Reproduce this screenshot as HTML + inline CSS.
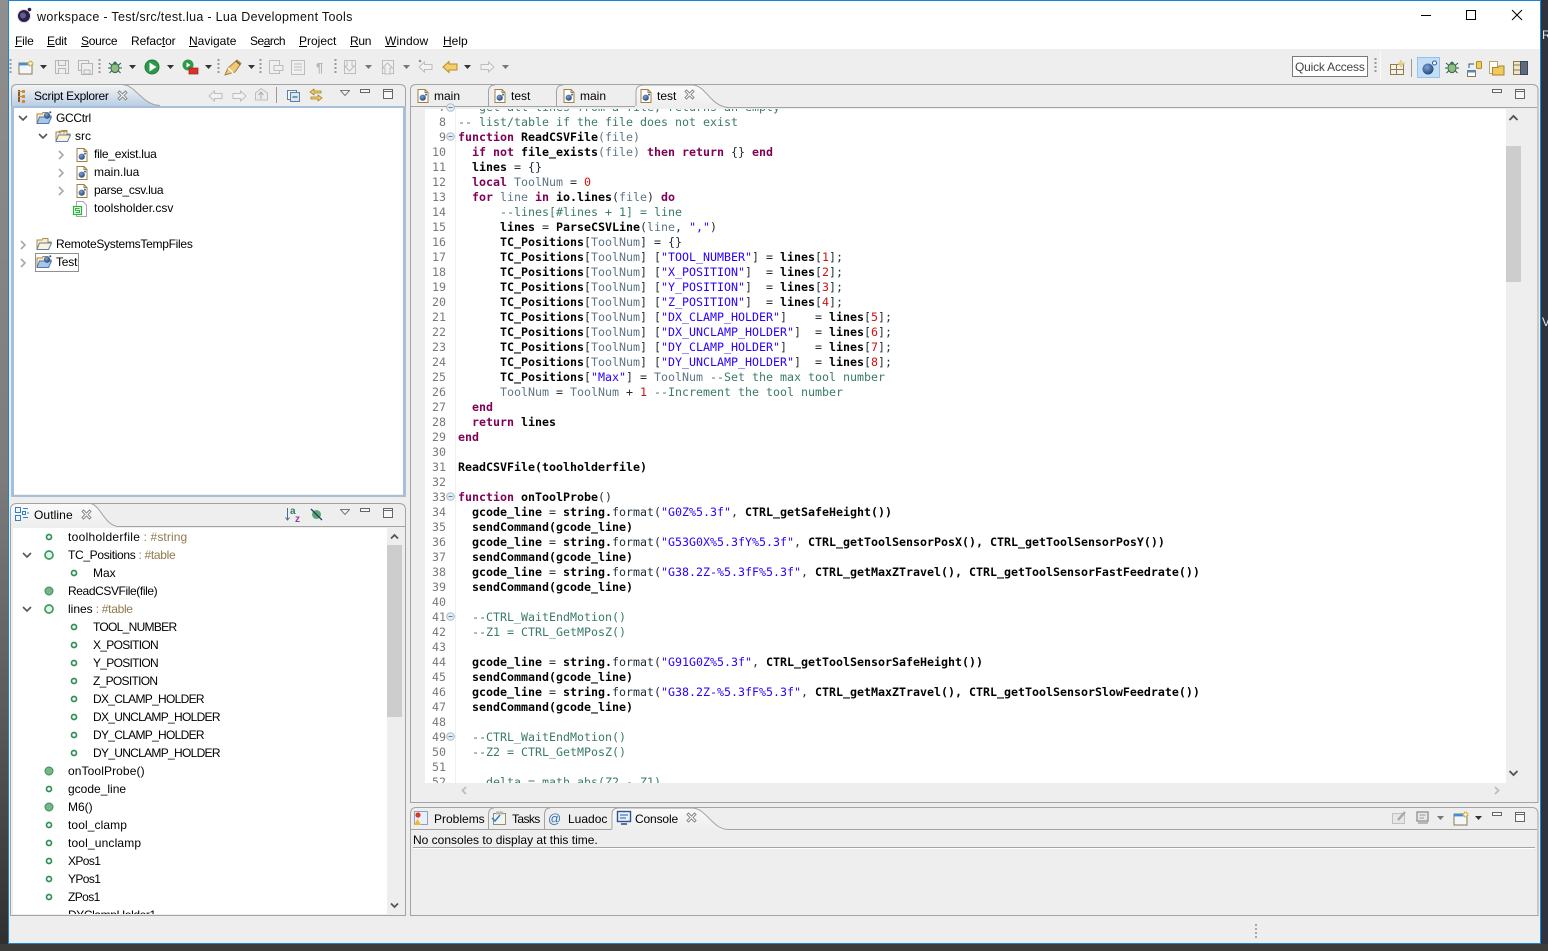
<!DOCTYPE html>
<html>
<head>
<meta charset="utf-8">
<title>workspace - Test/src/test.lua - Lua Development Tools</title>
<style>
html,body{margin:0;padding:0;width:1548px;height:951px;overflow:hidden;background:#3a3a3c}
#bgL{position:absolute;left:0;top:0;width:8px;height:951px;background:linear-gradient(#8f8f8f 0,#7c7c7c 50%,#5a5a5a 75%,#2e2e2e 100%)}
#bgR{position:absolute;left:1541px;top:0;width:7px;height:951px;background:#2f3340;overflow:hidden}
#bgB{position:absolute;left:0;top:944px;width:1548px;height:7px;background:#3c3c3a}
#win{position:absolute;left:8px;top:0;width:1531px;height:942px;border:1px solid #1883d7;background:#eeeeee}
#titlebar{position:absolute;left:9px;top:1px;width:1531px;height:48px;background:#fff}
.t{position:absolute;white-space:nowrap;font:12px/18px "Liberation Sans",sans-serif;color:#000;height:18px}
.w{position:absolute;background:#fff}
.thumb{position:absolute;background:#cdcdcd}
u{text-decoration:underline}
.g{color:#8f7a4d;letter-spacing:-.3px}
.cap{letter-spacing:-.7px}
#codebox{position:absolute;left:425px;top:109px;width:1081px;height:674px;background:#fff;overflow:hidden}
#nums,#code{position:absolute;top:-9px;margin:0;font:11.643px/15px "DejaVu Sans Mono","Liberation Mono",monospace;white-space:pre}
#nums{left:0;width:21px;text-align:right;color:#787878}
#code{left:33px;color:#1f2d36}
#gut{position:absolute;left:30px;top:0;width:1px;height:674px;background:#f0f0f0}
.k{color:#7f0055;font-weight:bold}
.b{color:#000;font-weight:bold}
.v{color:#5f7686}
.c{color:#3a7a6a}
.s{color:#2a00ff}
.n{color:#d01010}
svg#ov{position:absolute;left:0;top:0;width:1548px;height:951px}
</style>
</head>
<body>
<div id="bgL"></div>
<div id="bgR"><div class="t" style="left:1px;top:26px;color:#dfe8ee">R</div><div class="t" style="left:1px;top:313px;color:#dfe8ee">V</div></div>
<div id="bgB"></div>
<div id="win"></div>
<div id="titlebar"></div>

<!-- white content areas -->
<div class="w" style="left:13px;top:108px;width:390px;height:386px"></div>
<div class="w" style="left:13px;top:528px;width:374px;height:386px"></div>
<div id="codebox">
<div id="gut"></div>
<pre id="nums">7
8
9
10
11
12
13
14
15
16
17
18
19
20
21
22
23
24
25
26
27
28
29
30
31
32
33
34
35
36
37
38
39
40
41
42
43
44
45
46
47
48
49
50
51
52</pre>
<pre id="code"><span class="c">-- get all lines from a file, returns an empty</span>
<span class="c">-- list/table if the file does not exist</span>
<span class="k">function</span> <span class="b">ReadCSVFile</span><span class="v">(file)</span>
  <span class="k">if not</span> <span class="b">file_exists</span><span class="v">(file)</span> <span class="k">then return</span> {} <span class="k">end</span>
  <span class="b">lines</span> = {}
  <span class="k">local</span> <span class="v">ToolNum</span> = <span class="n">0</span>
  <span class="k">for</span> <span class="v">line</span> <span class="k">in</span> <span class="b">io.lines</span>(<span class="v">file</span>) <span class="k">do</span>
      <span class="c">--lines[#lines + 1] = line</span>
      <span class="b">lines</span> = <span class="b">ParseCSVLine</span>(<span class="v">line</span>, <span class="s">","</span>)
      <span class="b">TC_Positions</span>[<span class="v">ToolNum</span>] = {}
      <span class="b">TC_Positions</span>[<span class="v">ToolNum</span>] [<span class="s">"TOOL_NUMBER"</span>] = <span class="b">lines</span>[<span class="n">1</span>];
      <span class="b">TC_Positions</span>[<span class="v">ToolNum</span>] [<span class="s">"X_POSITION"</span>]  = <span class="b">lines</span>[<span class="n">2</span>];
      <span class="b">TC_Positions</span>[<span class="v">ToolNum</span>] [<span class="s">"Y_POSITION"</span>]  = <span class="b">lines</span>[<span class="n">3</span>];
      <span class="b">TC_Positions</span>[<span class="v">ToolNum</span>] [<span class="s">"Z_POSITION"</span>]  = <span class="b">lines</span>[<span class="n">4</span>];
      <span class="b">TC_Positions</span>[<span class="v">ToolNum</span>] [<span class="s">"DX_CLAMP_HOLDER"</span>]    = <span class="b">lines</span>[<span class="n">5</span>];
      <span class="b">TC_Positions</span>[<span class="v">ToolNum</span>] [<span class="s">"DX_UNCLAMP_HOLDER"</span>]  = <span class="b">lines</span>[<span class="n">6</span>];
      <span class="b">TC_Positions</span>[<span class="v">ToolNum</span>] [<span class="s">"DY_CLAMP_HOLDER"</span>]    = <span class="b">lines</span>[<span class="n">7</span>];
      <span class="b">TC_Positions</span>[<span class="v">ToolNum</span>] [<span class="s">"DY_UNCLAMP_HOLDER"</span>]  = <span class="b">lines</span>[<span class="n">8</span>];
      <span class="b">TC_Positions</span>[<span class="s">"Max"</span>] = <span class="v">ToolNum</span> <span class="c">--Set the max tool number</span>
      <span class="v">ToolNum</span> = <span class="v">ToolNum</span> + <span class="n">1</span> <span class="c">--Increment the tool number</span>
  <span class="k">end</span>
  <span class="k">return</span> <span class="b">lines</span>
<span class="k">end</span>

<span class="b">ReadCSVFile(toolholderfile)</span>

<span class="k">function</span> <span class="b">onToolProbe</span>()
  <span class="b">gcode_line</span> = <span class="b">string.</span>format(<span class="s">"G0Z%5.3f"</span>, <span class="b">CTRL_getSafeHeight())</span>
  <span class="b">sendCommand(gcode_line)</span>
  <span class="b">gcode_line</span> = <span class="b">string.</span>format(<span class="s">"G53G0X%5.3fY%5.3f"</span>, <span class="b">CTRL_getToolSensorPosX(), CTRL_getToolSensorPosY())</span>
  <span class="b">sendCommand(gcode_line)</span>
  <span class="b">gcode_line</span> = <span class="b">string.</span>format(<span class="s">"G38.2Z-%5.3fF%5.3f"</span>, <span class="b">CTRL_getMaxZTravel(), CTRL_getToolSensorFastFeedrate())</span>
  <span class="b">sendCommand(gcode_line)</span>

  <span class="c">--CTRL_WaitEndMotion()</span>
  <span class="c">--Z1 = CTRL_GetMPosZ()</span>

  <span class="b">gcode_line</span> = <span class="b">string.</span>format(<span class="s">"G91G0Z%5.3f"</span>, <span class="b">CTRL_getToolSensorSafeHeight())</span>
  <span class="b">sendCommand(gcode_line)</span>
  <span class="b">gcode_line</span> = <span class="b">string.</span>format(<span class="s">"G38.2Z-%5.3fF%5.3f"</span>, <span class="b">CTRL_getMaxZTravel(), CTRL_getToolSensorSlowFeedrate())</span>
  <span class="b">sendCommand(gcode_line)</span>

  <span class="c">--CTRL_WaitEndMotion()</span>
  <span class="c">--Z2 = CTRL_GetMPosZ()</span>

    <span class="c">delta = math.abs(Z2 - Z1)</span></pre>
</div>

<!-- scrollbar thumbs -->
<div class="thumb" style="left:1506px;top:146px;width:15px;height:136px"></div>
<div class="thumb" style="left:387px;top:545px;width:15px;height:172px"></div>

<svg id="ov" viewBox="0 0 1548 951" xmlns="http://www.w3.org/2000/svg">
<defs>
<linearGradient id="blueTab" x1="0" y1="0" x2="0" y2="1"><stop offset="0" stop-color="#f4f4f4"/><stop offset="1" stop-color="#b9cee6"/></linearGradient>
<linearGradient id="whiteTab" x1="0" y1="0" x2="0" y2="1"><stop offset="0" stop-color="#fafafa"/><stop offset="1" stop-color="#eeeeee"/></linearGradient>
<radialGradient id="ball" cx=".4" cy=".35" r=".7"><stop offset="0" stop-color="#7fa3d0"/><stop offset="1" stop-color="#1f3f78"/></radialGradient>
<symbol id="tri" viewBox="0 0 7 4" width="7" height="4"><path d="M0 0H7L3.5 4Z" fill="#333"/></symbol>
<symbol id="trig" viewBox="0 0 7 4" width="7" height="4"><path d="M0 0H7L3.5 4Z" fill="#777"/></symbol>
<symbol id="viewm" viewBox="0 0 10 6" width="10" height="6"><path d="M.5 .5H9.5L5 5.5Z" fill="#f4f4f4" stroke="#777"/></symbol>
<symbol id="min" viewBox="0 0 10 4" width="10" height="4"><rect x=".5" y=".5" width="9" height="3" fill="#f6f6f6" stroke="#666"/></symbol>
<symbol id="max" viewBox="0 0 10 10" width="10" height="10"><rect x=".5" y=".5" width="9" height="9" fill="#f8f8f8" stroke="#666"/><path d="M.5 2.5H9.5" stroke="#666"/></symbol>
<symbol id="xclose" viewBox="0 0 11 11" width="11" height="11"><path d="M1 2.5L2.5 1L5.5 4L8.5 1L10 2.5L7 5.5L10 8.5L8.5 10L5.5 7L2.5 10L1 8.5L4 5.5Z" fill="#fff" stroke="#8a8a8a"/></symbol>
<symbol id="lua" viewBox="0 0 12 14" width="12" height="14"><path d="M1 .5H8L11 3.5V13.5H1Z" fill="#fff" stroke="#9c8142"/><path d="M8 .5V3.5H11" fill="none" stroke="#9c8142"/><circle cx="5.7" cy="8.7" r="3.1" fill="url(#ball)"/><circle cx="9" cy="5.6" r="1" fill="#3a62a0"/></symbol>
<symbol id="dn" viewBox="0 0 10 7" width="10" height="7"><path d="M1 1L5 5L9 1" fill="none" stroke="#555" stroke-width="1.6"/></symbol>
<symbol id="rt" viewBox="0 0 7 10" width="7" height="10"><path d="M1 1L5 5L1 9" fill="none" stroke="#a8a8a8" stroke-width="1.6"/></symbol>
<symbol id="folder" viewBox="0 0 16 14" width="16" height="14"><path d="M1 3H6L7 1.5H12V5H15L12.5 12.5H1Z" fill="#fbeec8" stroke="#a88a4a"/><path d="M1 12.5L3.5 6H15.5L12.5 12.5Z" fill="#fdf4d8" stroke="#5b7fb0"/></symbol>
<symbol id="proj" viewBox="0 0 16 14" width="16" height="14"><path d="M1 3H6L7 1.5H12V5H15L12.5 12.5H1Z" fill="#fbeec8" stroke="#a88a4a"/><path d="M1 12.5L3.5 6H15.5L12.5 12.5Z" fill="#a9c6ea" stroke="#4d78b0"/><circle cx="11" cy="4.5" r="3.2" fill="url(#ball)"/><circle cx="14.3" cy="1.2" r="1" fill="#2f5592"/></symbol>
<symbol id="dots" viewBox="0 0 3 16" width="3" height="16"><path d="M1.5 0V16" stroke="#9a9a9a" stroke-width="2" stroke-dasharray="2 2"/></symbol>
<symbol id="ringS" viewBox="0 0 8 8" width="8" height="8"><circle cx="4" cy="4" r="2.5" fill="#fff" stroke="#2f8f56" stroke-width="1.7"/></symbol>
<symbol id="ringB" viewBox="0 0 12 12" width="12" height="12"><circle cx="6" cy="6" r="4" fill="#e6f3ea" stroke="#3b9a62" stroke-width="1.7"/></symbol>
<symbol id="fill" viewBox="0 0 10 10" width="10" height="10"><circle cx="5" cy="5" r="4" fill="#78b68a" stroke="#2f8f56"/></symbol>
<symbol id="fold" viewBox="0 0 9 9" width="9" height="9"><circle cx="4.5" cy="4.5" r="3.8" fill="#e4ecf4" stroke="#a6bbcf"/><path d="M2.5 4.5H6.5" stroke="#5f7f9f"/></symbol>
<symbol id="bug" viewBox="0 0 16 15" width="16" height="15"><g stroke="#2c5a4a" stroke-width="1" fill="none"><path d="M2 3L5 5.5M14 3L11 5.5M1 8H4M12 8H15M2.5 13L5 10.5M13.5 13L11 10.5"/></g><ellipse cx="8" cy="8" rx="4" ry="4.6" fill="#8dbf7e" stroke="#3b6b52"/><circle cx="8" cy="3.2" r="1.6" fill="#3b6b52"/></symbol>
<symbol id="arrL" viewBox="0 0 15 12" width="15" height="12"><path d="M1 6L6.5 1V3.5H14V8.5H6.5V11Z" fill="#f2f2f2" stroke="#bdbdbd"/></symbol>
<symbol id="arrR" viewBox="0 0 15 12" width="15" height="12"><path d="M14 6L8.5 1V3.5H1V8.5H8.5V11Z" fill="#f2f2f2" stroke="#bdbdbd"/></symbol>
<symbol id="newwin" viewBox="0 0 16 15" width="16" height="15"><rect x="1" y="3" width="13" height="11" fill="#f3f7fb" stroke="#8f7a4d"/><rect x="1" y="3" width="13" height="2.4" fill="#3d8fd9"/><path d="M12.5 .7V6.3M9.7 3.5H15.3" stroke="#c9a23f" stroke-width="3"/><path d="M12.5 1.5V5.5M10.5 3.5H14.5" stroke="#fff6cf" stroke-width="1.5"/></symbol>
</defs>

<!-- Script Explorer panel -->
<path d="M11.5 108V90Q11.5 84.5 17 84.5H400Q405.5 84.5 405.5 90V496H11.5Z" fill="none" stroke="#a3a3a3"/>
<path d="M12 106V92Q12 85 18 85H122C136 85 142 105 160 106Z" fill="url(#blueTab)"/>
<path d="M11 106H14V495H403V106H406V497H11Z" fill="#a7bfd9"/>
<rect x="11" y="106" width="395" height="2" fill="#a7bfd9"/>
<path d="M122 84.5C136 85 142 105 160 105.5" fill="none" stroke="#a3a3a3"/>

<!-- Outline panel -->
<path d="M10.5 915.5V510Q10.5 503.5 17 503.5H399Q405.5 503.5 405.5 510V915.5Z" fill="none" stroke="#a3a3a3"/>
<path d="M11 526V510Q11 504 17 504H90C100 504 104 526 118 526Z" fill="url(#whiteTab)"/>
<path d="M90 503.5C100 504 104 525 118 526.5H405" fill="none" stroke="#a3a3a3"/>

<!-- Editor panel -->
<path d="M410.5 802.5V90Q410.5 84.5 416 84.5H1532Q1538 84.5 1538 90V802.5Z" fill="none" stroke="#a3a3a3"/>
<path d="M726 107.5H1537M411 106.5H635" stroke="#a3a3a3"/>
<path d="M636 107V92Q636 85 644 85H692C708 85 712 106 728 106H726V107H636Z" fill="url(#whiteTab)"/>
<path d="M636 106V92Q636 85 644 85H692C706 85 710 106 728 107.5" fill="none" stroke="#a3a3a3"/>
<path d="M488.5 106V91Q489 85 495 85M556.5 106V91Q557 85 563 85" fill="none" stroke="#a3a3a3"/>

<!-- Console panel -->
<path d="M410.5 915.5V814Q410.5 807.5 416 807.5H1532Q1538 807.5 1538 814V915.5Z" fill="none" stroke="#a3a3a3"/>
<path d="M728 829.5H1537M411 829.5H612" stroke="#a3a3a3"/>
<path d="M612 829V814Q612 808 619 808H692C708 808 712 829 728 829.5Z" fill="url(#whiteTab)"/>
<path d="M612 829V814Q612 808 619 808H692C706 808 712 829 728 829.5" fill="none" stroke="#a3a3a3"/>
<path d="M488.5 829V814Q489 808 494 808M544.5 829V814Q545 808 550 808" fill="none" stroke="#a3a3a3"/>
<path d="M413 847.5H1535" stroke="#a3a3a3"/><path d="M413 848.5H1535" stroke="#fff"/>

<!-- Window controls -->
<path d="M1421 15.5H1431" stroke="#000"/>
<rect x="1466.5" y="10.5" width="9" height="9" fill="none" stroke="#000"/>
<path d="M1512 10L1522 20M1522 10L1512 20" stroke="#000"/>

<!-- App icon -->
<circle cx="24" cy="16" r="6.5" fill="#2a2050" stroke="#e8dfe8" stroke-width="1"/>
<circle cx="23" cy="15.5" r="3" fill="#d8d4e8" opacity=".35"/>
<circle cx="29.5" cy="9.5" r="1.8" fill="#2a2050"/>

<!-- Toolbar grips -->
<use href="#dots" x="9" y="59"/><use href="#dots" x="98" y="59"/><use href="#dots" x="217" y="59"/><use href="#dots" x="259" y="59"/><use href="#dots" x="334" y="59"/><use href="#dots" x="1374" y="58"/>

<!-- Toolbar icons -->
<use href="#newwin" x="18" y="60"/><use href="#tri" x="40" y="65"/>
<g fill="#eeeeee" stroke="#b5b5b5"><path d="M55.5 60.5H68.5V73.5H55.5Z"/><path d="M58.5 60.5H65.5V65.5H58.5ZM58.5 73.5V68.5H65.5V73.5"/><path d="M78.5 60.5H88.5V70.5H78.5Z"/><path d="M81.5 63.5H92.5V74.5H81.5Z"/><path d="M84 70V74H90V70Z"/></g>
<use href="#bug" x="107" y="60"/><use href="#tri" x="129" y="65"/>
<circle cx="152" cy="67" r="7" fill="#2d9a4b" stroke="#1f7a3a"/><path d="M149.5 62.5L156.5 67L149.5 71.5Z" fill="#fff"/><use href="#tri" x="167" y="65"/>
<circle cx="188" cy="65" r="5.5" fill="#2d9a4b"/><path d="M186.5 62.5L190.5 65L186.5 67.5Z" fill="#fff"/><rect x="189" y="68" width="9" height="6" fill="#d8322c" stroke="#9c1f1c" stroke-width=".7"/><use href="#tri" x="205" y="65"/>
<path d="M225 75L228 68L237 60L241 63.5L235 72Z" fill="#f1c877" stroke="#a9803d"/><path d="M228 68L233 73" stroke="#fff" stroke-width="1.4"/><path d="M236 61L240 64.5" stroke="#6d5a32" stroke-width="1.4"/><use href="#tri" x="248" y="65"/>
<g fill="#f0f0f0" stroke="#bdbdbd"><path d="M269.5 60.5H279.5V73.5H269.5Z"/><path d="M274 65.5H283V70.5H274Z"/><path d="M291.5 60.5H304.5V74.5H291.5Z"/><path d="M294 64H302M294 67H302M294 70H302" fill="none"/></g>
<text x="316" y="72" font-family="Liberation Sans" font-size="13" font-weight="bold" fill="#b5b5b5">¶</text>
<g fill="#f0f0f0" stroke="#bdbdbd"><path d="M344.5 60.5H355.5V73.5H344.5Z"/><path d="M347 60.5H352V66H354.5L349.5 71L344.5 66H347Z"/><path d="M382.5 60.5H393.5V73.5H382.5Z"/><path d="M385 74V68H382.5L387.5 63L392.5 68H390V74Z"/></g>
<use href="#trig" x="365" y="65"/><use href="#trig" x="403" y="65"/>
<use href="#arrL" x="418" y="61"/><path d="M419 60L421 62M421 60L419 62" stroke="#888"/>
<path d="M443 67L449 61.5V64H457V70H449V72.5Z" fill="#f6cf6d" stroke="#b98a2a"/><use href="#tri" x="464" y="65"/>
<use href="#arrR" x="480" y="61"/><use href="#trig" x="502" y="65"/>

<!-- Quick Access -->
<rect x="1292.5" y="56.5" width="75" height="20" fill="#fff" stroke="#7a7a7a"/>

<!-- Perspectives -->
<path d="M1380.5 52V80" stroke="#fafafa"/><path d="M1411.5 59V77" stroke="#999"/>
<rect x="1390.5" y="64.5" width="13" height="10" fill="#f5f1e4" stroke="#8f7a4d"/><path d="M1390.5 69.5H1403.5M1396.5 64.5V74.5" stroke="#8f7a4d"/><path d="M1401 60V67M1398 63.5H1405" stroke="#e6cf8a" stroke-width="2.2"/>
<rect x="1417.5" y="57.5" width="22" height="20" fill="#c4dff5" stroke="#8fc4ef"/>
<circle cx="1428" cy="69" r="5.5" fill="url(#ball)"/><circle cx="1434.5" cy="63" r="2" fill="#fff" stroke="#2f5592"/>
<use href="#bug" x="1444" y="60"/>
<rect x="1467.5" y="70.5" width="8" height="6" fill="#fff" stroke="#8f7a4d"/><rect x="1467.5" y="70.5" width="8" height="2" fill="#3d8fd9"/><rect x="1476.5" y="61.5" width="5" height="7" rx="1" fill="#f2cf55" stroke="#a88a2a"/><path d="M1469 68V64H1474" fill="none" stroke="#2f5592"/>
<rect x="1489.5" y="61.5" width="8" height="12" fill="#fff" stroke="#b9a36a"/><path d="M1492.5 67.5H1498L1499 66H1504V75H1492.5Z" fill="#f2c95d" stroke="#a8832a"/>
<rect x="1513.5" y="61.5" width="7" height="13" fill="#eee6c8" stroke="#8f7a4d"/><path d="M1513.5 65H1520.5M1513.5 70H1520.5" stroke="#8f7a4d"/><rect x="1520.5" y="61.5" width="7" height="13" fill="#5a6c80" stroke="#3a4758"/><circle cx="1524" cy="68" r="1" fill="#d33"/>

<!-- Script Explorer tab icons -->
<g fill="#d08a30"><rect x="18" y="90" width="2" height="12" fill="#8f5a20"/><rect x="22" y="90" width="3" height="3"/><rect x="22" y="95" width="3" height="3"/><rect x="22" y="100" width="3" height="3"/><rect x="18" y="91" width="4" height="1"/><rect x="18" y="96" width="4" height="1"/></g>
<use href="#xclose" x="117" y="90"/>
<use href="#arrL" x="208" y="90"/><use href="#arrR" x="232" y="90"/>
<path d="M255.5 93L261 88.5L267.5 93V100H255.5Z" fill="#ececec" stroke="#bdbdbd"/><path d="M261 92V99M258.5 95L261 92L263.5 95" fill="none" stroke="#aaa"/>
<path d="M276.5 87V103" stroke="#999"/>
<rect x="287.5" y="90.5" width="9" height="9" fill="#f3f7fb" stroke="#5f7f9f"/><rect x="290.5" y="92.5" width="9" height="9" fill="#d8e7f4" stroke="#5f7f9f"/><path d="M292.5 97H297.5" stroke="#1f3f78"/>
<path d="M310 92L314 89V91H321V93H314V95ZM322 98L318 95V97H311V99H318V101Z" fill="#f6cf6d" stroke="#a8832a" stroke-width=".8"/>
<use href="#viewm" x="340" y="90"/><use href="#min" x="360" y="89"/><use href="#max" x="383" y="89"/>

<!-- Explorer tree -->
<g transform="translate(0,1)">
<use href="#dn" x="18" y="114"/><use href="#proj" x="36" y="110"/>
<use href="#dn" x="38" y="132"/><use href="#folder" x="55" y="128"/><path d="M60 129V133M64 129V133M58 130.5H67" stroke="#a88a4a" stroke-width=".8"/>
<use href="#rt" x="58" y="149"/><use href="#lua" x="76" y="147"/>
<use href="#rt" x="58" y="167"/><use href="#lua" x="76" y="165"/>
<use href="#rt" x="58" y="185"/><use href="#lua" x="76" y="183"/>
<path d="M76.5 200.5H83L86.5 204V215.5H76.5Z" fill="#fff" stroke="#a8a8a8"/><rect x="73.5" y="205.5" width="8" height="8" fill="#e9f7ea" stroke="#2fb040" stroke-width="1.2"/><path d="M79.5 207.5H75.5V209.5H79.5V211.5H75.5" fill="none" stroke="#2fb040"/>
<use href="#rt" x="20" y="239"/><use href="#folder" x="36" y="236"/>
<use href="#rt" x="20" y="257"/><use href="#proj" x="36" y="254"/>
</g>
<rect x="35.5" y="253.5" width="43" height="18" fill="none" stroke="#222" stroke-dasharray="1 1"/>

<!-- Outline tab icons -->
<g fill="#eef5fb" stroke="#3a7cc0"><rect x="15.5" y="507.5" width="5" height="5"/><rect x="15.5" y="515.5" width="5" height="5"/><rect x="22.5" y="511.5" width="3" height="3"/></g><path d="M23 508.5H28M27 513H29M23 517.5H28" stroke="#3a7cc0"/>
<use href="#xclose" x="81" y="509"/>
<path d="M287.5 508V520M285.5 517.5L287.5 520L289.5 517.5" fill="none" stroke="#4a6a8a"/>
<text x="290" y="514" font-family="Liberation Sans" font-size="10" font-weight="bold" fill="#2a7f6a">a</text><text x="295" y="522" font-family="Liberation Sans" font-size="10" font-weight="bold" fill="#8f3f9f">z</text>
<circle cx="316.5" cy="514.5" r="4.5" fill="#5fa872"/><path d="M311 509L322 520" stroke="#1f3f78" stroke-width="1.3"/>
<use href="#viewm" x="340" y="509"/><use href="#min" x="360" y="508"/><use href="#max" x="383" y="508"/>

<!-- Outline tree icons -->
<use href="#ringS" x="45" y="533"/>
<use href="#dn" x="22" y="552"/><use href="#ringB" x="43" y="549"/>
<use href="#ringS" x="70" y="569"/>
<use href="#fill" x="44" y="586"/>
<use href="#dn" x="22" y="606"/><use href="#ringB" x="43" y="603"/>
<use href="#ringS" x="70" y="623"/><use href="#ringS" x="70" y="641"/><use href="#ringS" x="70" y="659"/><use href="#ringS" x="70" y="677"/><use href="#ringS" x="70" y="695"/><use href="#ringS" x="70" y="713"/><use href="#ringS" x="70" y="731"/><use href="#ringS" x="70" y="749"/>
<use href="#fill" x="44" y="766"/>
<use href="#ringS" x="45" y="785"/>
<use href="#fill" x="44" y="802"/>
<use href="#ringS" x="45" y="821"/><use href="#ringS" x="45" y="839"/><use href="#ringS" x="45" y="857"/><use href="#ringS" x="45" y="875"/><use href="#ringS" x="45" y="893"/>

<!-- Outline scroll arrows -->
<path d="M391 538.5L394.5 535L398 538.5" fill="none" stroke="#555" stroke-width="1.8"/>
<path d="M391 903.5L394.5 907L398 903.5" fill="none" stroke="#555" stroke-width="1.8"/>

<!-- Editor tabs icons -->
<use href="#lua" x="417" y="89"/><use href="#lua" x="494" y="89"/><use href="#lua" x="563" y="89"/><use href="#lua" x="640" y="89"/>
<use href="#xclose" x="684" y="89"/>
<use href="#min" x="1492" y="89"/><use href="#max" x="1515" y="89"/>

<!-- Editor scroll arrows -->
<path d="M1509.5 120L1513.5 116L1517.5 120" fill="none" stroke="#555" stroke-width="1.9"/>
<path d="M1509.5 771L1513.5 775L1517.5 771" fill="none" stroke="#555" stroke-width="1.9"/>
<path d="M466 787L462.5 790.5L466 794" fill="none" stroke="#bdbdbd" stroke-width="1.8"/>
<path d="M1495 787L1498.5 790.5L1495 794" fill="none" stroke="#bdbdbd" stroke-width="1.8"/>

<!-- Fold markers -->
<use href="#fold" x="446" y="103"/><use href="#fold" x="446" y="132"/><use href="#fold" x="446" y="492"/><use href="#fold" x="446" y="612"/><use href="#fold" x="446" y="732"/>

<!-- Bottom tab icons -->
<rect x="414.5" y="811.5" width="13" height="13" fill="#eaf0f8" stroke="#8aa4c0"/><circle cx="418" cy="815" r="2.6" fill="#e0332c"/><path d="M417.5 819L421 825H414Z" fill="#f0b832"/>
<rect x="493.5" y="813.5" width="12" height="11" fill="#f4f4ee" stroke="#8f8f7a"/><rect x="496" y="811.5" width="7" height="3" fill="#b9b9a8"/><path d="M492 818L495 821L500 815" fill="none" stroke="#2f7fd0" stroke-width="1.5"/>
<text x="548" y="823" font-family="Liberation Sans" font-size="13" fill="#2f6fb0">@</text>
<rect x="617.5" y="811.5" width="13" height="10" fill="#e8f0fa" stroke="#2f5592" stroke-width="1.4"/><path d="M620 815H628M620 818H626" stroke="#2f5592"/><path d="M621 824H627" stroke="#2f5592" stroke-width="1.6"/>
<use href="#xclose" x="686" y="812"/>
<rect x="1392.5" y="813.5" width="12" height="10" fill="#e6e6e6" stroke="#c0c0c0"/><path d="M1398 820L1405 812" stroke="#a8a8a8" stroke-width="2.4"/>
<rect x="1417" y="812" width="11" height="9" fill="#e8e8e8" stroke="#9a9a9a" stroke-width="1.5"/><path d="M1419.5 815H1425.5M1419.5 818H1424" stroke="#9a9a9a"/><path d="M1418 823H1428" stroke="#9a9a9a" stroke-width="1.3"/>
<use href="#trig" x="1437" y="816"/>
<use href="#newwin" x="1453" y="811"/><use href="#tri" x="1475" y="816"/>
<use href="#min" x="1492" y="812"/><use href="#max" x="1515" y="812"/>

<!-- Status grip -->
<path d="M1256 924V938" stroke="#a8a8a8" stroke-width="2" stroke-dasharray="2 2"/>
</svg>

<!-- Title + menu -->
<div class="t" style="left:37px;top:8px;font-size:12.5px;letter-spacing:.315px;color:#111">workspace - Test/src/test.lua - Lua Development Tools</div>
<div class="t" style="left:15px;top:32px;letter-spacing:-.2px"><u>F</u>ile</div>
<div class="t" style="left:47px;top:32px;letter-spacing:-.2px"><u>E</u>dit</div>
<div class="t" style="left:81px;top:32px;letter-spacing:-.3px"><u>S</u>ource</div>
<div class="t" style="left:131px;top:32px;letter-spacing:-.1px">Refac<u>t</u>or</div>
<div class="t" style="left:189px;top:32px"><u>N</u>avigate</div>
<div class="t" style="left:250px;top:32px;letter-spacing:-.5px">Se<u>a</u>rch</div>
<div class="t" style="left:299px;top:32px"><u>P</u>roject</div>
<div class="t" style="left:350px;top:32px;letter-spacing:-.3px"><u>R</u>un</div>
<div class="t" style="left:385px;top:32px;letter-spacing:.1px"><u>W</u>indow</div>
<div class="t" style="left:443px;top:32px"><u>H</u>elp</div>
<div class="t" style="left:1295px;top:58px;color:#444;letter-spacing:-.2px">Quick Access</div>

<!-- Panel tab titles -->
<div class="t" style="left:34px;top:87px;letter-spacing:-.27px">Script Explorer</div>
<div class="t" style="left:34px;top:506px;letter-spacing:.1px">Outline</div>
<div class="t" style="left:434px;top:87px">main</div>
<div class="t" style="left:511px;top:87px">test</div>
<div class="t" style="left:580px;top:87px">main</div>
<div class="t" style="left:657px;top:87px">test</div>
<div class="t" style="left:434px;top:810px">Problems</div>
<div class="t" style="left:512px;top:810px;letter-spacing:-.6px">Tasks</div>
<div class="t" style="left:568px;top:810px">Luadoc</div>
<div class="t" style="left:635px;top:810px;letter-spacing:-.15px">Console</div>
<div class="t" style="left:413px;top:831px">No consoles to display at this time.</div>

<!-- Explorer tree text -->
<div class="t" style="left:56px;top:109px;letter-spacing:-.3px">GCCtrl</div>
<div class="t" style="left:75px;top:127px">src</div>
<div class="t" style="left:94px;top:145px;letter-spacing:-.25px">file_exist.lua</div>
<div class="t" style="left:94px;top:163px">main.lua</div>
<div class="t" style="left:94px;top:181px;letter-spacing:-.3px">parse_csv.lua</div>
<div class="t" style="left:94px;top:199px">toolsholder.csv</div>
<div class="t" style="left:56px;top:235px;letter-spacing:-.28px">RemoteSystemsTempFiles</div>
<div class="t" style="left:56px;top:253px;letter-spacing:-.2px">Test</div>

<!-- Outline tree text -->
<div style="position:absolute;left:13px;top:528px;width:374px;height:386px;overflow:hidden">
<div class="t" style="left:55px;top:0px"><span style="letter-spacing:.3px">toolholderfile</span><span class="g" style="letter-spacing:.1px"> : #string</span></div>
<div class="t" style="left:55px;top:18px"><span style="letter-spacing:-.33px">TC_Positions</span><span class="g"> : #table</span></div>
<div class="t" style="left:80px;top:36px">Max</div>
<div class="t" style="left:55px;top:54px;letter-spacing:-.4px">ReadCSVFile(file)</div>
<div class="t" style="left:55px;top:72px">lines<span class="g"> : #table</span></div>
<div class="t cap" style="left:80px;top:90px">TOOL_NUMBER</div>
<div class="t cap" style="left:80px;top:108px">X_POSITION</div>
<div class="t cap" style="left:80px;top:126px">Y_POSITION</div>
<div class="t cap" style="left:80px;top:144px">Z_POSITION</div>
<div class="t cap" style="left:80px;top:162px">DX_CLAMP_HOLDER</div>
<div class="t cap" style="left:80px;top:180px">DX_UNCLAMP_HOLDER</div>
<div class="t cap" style="left:80px;top:198px">DY_CLAMP_HOLDER</div>
<div class="t cap" style="left:80px;top:216px">DY_UNCLAMP_HOLDER</div>
<div class="t" style="left:55px;top:234px;letter-spacing:.1px">onToolProbe()</div>
<div class="t" style="left:55px;top:252px">gcode_line</div>
<div class="t" style="left:55px;top:270px">M6()</div>
<div class="t" style="left:55px;top:288px;letter-spacing:.1px">tool_clamp</div>
<div class="t" style="left:55px;top:306px;letter-spacing:.15px">tool_unclamp</div>
<div class="t" style="left:55px;top:324px;letter-spacing:-.6px">XPos1</div>
<div class="t" style="left:55px;top:342px;letter-spacing:-.6px">YPos1</div>
<div class="t" style="left:55px;top:360px;letter-spacing:-.6px">ZPos1</div>
<div class="t" style="left:55px;top:378px;letter-spacing:-.4px">DYClampHolder1</div>
</div>
</body>
</html>
